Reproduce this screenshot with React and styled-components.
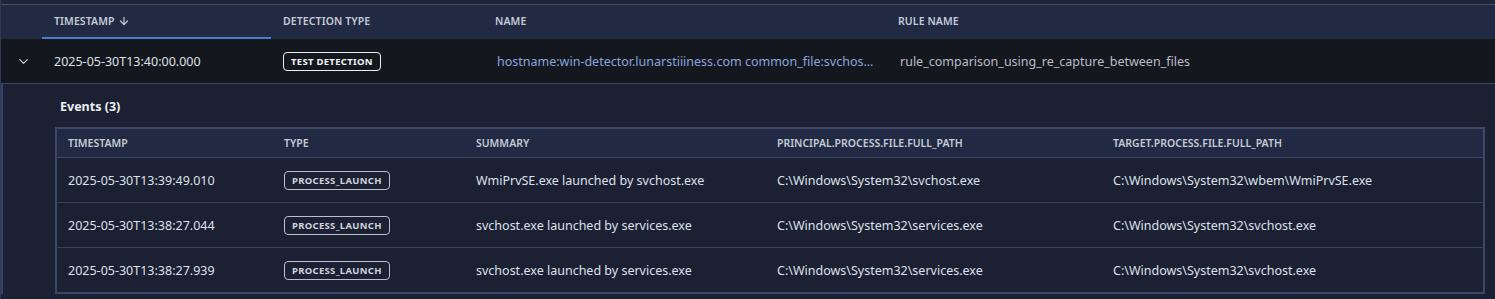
import styled, { createGlobalStyle } from "styled-components";
import { ChevronDown, ArrowDown } from "lucide-react";

const GlobalStyle = createGlobalStyle`
  body {
    margin: 0;
    background: #1b2033;
    font-family: "Noto Sans", "Open Sans", sans-serif;
    -webkit-font-smoothing: antialiased;
  }
`;

const Panel = styled.div`
  width: 1495px;
  height: 299px;
  overflow: hidden;
  background: #1b2033;
  border-left: 1px solid #2e3953;
  box-sizing: border-box;
`;

const TopStrip = styled.div`
  height: 4px;
  background: #1d2539;
  border-bottom: 1px solid #47526c;
`;

const HeadRow = styled.div`
  display: grid;
  grid-template-columns: 41px 229px 212px 403px 1fr;
  height: 34px;
  background: #212a42;
`;

const HeadCell = styled.div`
  display: flex;
  align-items: center;
  gap: 3px;
  padding-left: 12px;
  font-size: 10.5px;
  font-weight: 600;
  letter-spacing: 0.1px;
  color: #c4cad8;
  text-transform: uppercase;
  box-sizing: border-box;
  border-bottom: 2px solid ${(p) => (p.$active ? "#4d7ccf" : "transparent")};
`;

const MainRow = styled.div`
  display: grid;
  grid-template-columns: 41px 229px 212px 403px 1fr;
  height: 44px;
  background: #15171f;
  border-bottom: 1px solid #3a4562;
  align-items: center;
`;

const Toggle = styled.div`
  display: flex;
  justify-content: center;
  padding-left: 4px;
  color: #c5cbd8;
`;

const Cell = styled.div`
  padding-left: ${(p) => p.$pad || 12}px;
  padding-right: ${(p) => p.$padRight || 0}px;
  font-size: 12.5px;
  color: ${(p) => p.$color || "#dde1e9"};
  white-space: nowrap;
  overflow: hidden;
  text-overflow: ellipsis;
`;

const Badge = styled.span`
  display: inline-flex;
  align-items: center;
  height: 17px;
  padding: 0 7px;
  border: 1px solid ${(p) => (p.$muted ? "#b9bfcc" : "#eceef3")};
  border-radius: 4px;
  font-size: 9.5px;
  font-weight: 700;
  letter-spacing: 0.3px;
  color: ${(p) => (p.$muted ? "#cfd3dc" : "#f2f3f6")};
`;

const Expanded = styled.div`
  padding: 12px 10px 0 52px;
  border-left: 2px solid #33456c;
`;

const Title = styled.div`
  padding-left: 5px;
  font-size: 12.5px;
  font-weight: 700;
  color: #eef0f4;
  height: 22px;
  line-height: 22px;
  margin-bottom: 9px;
`;

const EventTable = styled.div`
  border: 2px solid #3b4869;
`;

const EventHead = styled.div`
  display: grid;
  grid-template-columns: 216px 192px 301px 336px 1fr;
  height: 28px;
  background: #212a42;
  border-bottom: 1px solid #3b4869;
  align-items: center;
`;

const EventHeadCell = styled.div`
  padding-left: 11px;
  font-size: 10.5px;
  font-weight: 600;
  color: #c4cad8;
`;

const EventRow = styled.div`
  display: grid;
  grid-template-columns: 216px 192px 301px 336px 1fr;
  height: 44px;
  align-items: center;
  background: #1b2033;
  border-top: ${(p) => (p.$first ? "none" : "1px solid #36425f")};
`;

const events = [
  {
    ts: "2025-05-30T13:39:49.010",
    summary: "WmiPrvSE.exe launched by svchost.exe",
    principal: "C:\\Windows\\System32\\svchost.exe",
    target: "C:\\Windows\\System32\\wbem\\WmiPrvSE.exe",
  },
  {
    ts: "2025-05-30T13:38:27.044",
    summary: "svchost.exe launched by services.exe",
    principal: "C:\\Windows\\System32\\services.exe",
    target: "C:\\Windows\\System32\\svchost.exe",
  },
  {
    ts: "2025-05-30T13:38:27.939",
    summary: "svchost.exe launched by services.exe",
    principal: "C:\\Windows\\System32\\services.exe",
    target: "C:\\Windows\\System32\\svchost.exe",
  },
];

const App = () => {
  return (
    <Panel>
      <GlobalStyle />
      <TopStrip />
      <HeadRow>
        <HeadCell />
        <HeadCell $active>
          Timestamp <ArrowDown size={12} strokeWidth={2.4} />
        </HeadCell>
        <HeadCell>Detection Type</HeadCell>
        <HeadCell>Name</HeadCell>
        <HeadCell>Rule Name</HeadCell>
      </HeadRow>
      <MainRow>
        <Toggle>
          <ChevronDown size={15} strokeWidth={2} />
        </Toggle>
        <Cell>2025-05-30T13:40:00.000</Cell>
        <Cell>
          <Badge>TEST DETECTION</Badge>
        </Cell>
        <Cell $pad={14} $padRight={10} $color="#86a6de">
          hostname:win-detector.lunarstiiiness.com common_file:svchost.exe
        </Cell>
        <Cell $pad={14} $color="#b9bdca">
          rule_comparison_using_re_capture_between_files
        </Cell>
      </MainRow>
      <Expanded>
        <Title>Events (3)</Title>
        <EventTable>
          <EventHead>
            <EventHeadCell>TIMESTAMP</EventHeadCell>
            <EventHeadCell>TYPE</EventHeadCell>
            <EventHeadCell>SUMMARY</EventHeadCell>
            <EventHeadCell>PRINCIPAL.PROCESS.FILE.FULL_PATH</EventHeadCell>
            <EventHeadCell>TARGET.PROCESS.FILE.FULL_PATH</EventHeadCell>
          </EventHead>
          {events.map((e, i) => (
            <EventRow key={e.ts} $first={i === 0}>
              <Cell $pad={11}>{e.ts}</Cell>
              <Cell $pad={11}>
                <Badge $muted>PROCESS_LAUNCH</Badge>
              </Cell>
              <Cell $pad={11}>{e.summary}</Cell>
              <Cell $pad={11}>{e.principal}</Cell>
              <Cell $pad={11}>{e.target}</Cell>
            </EventRow>
          ))}
        </EventTable>
      </Expanded>
    </Panel>
  );
};

export default App;
